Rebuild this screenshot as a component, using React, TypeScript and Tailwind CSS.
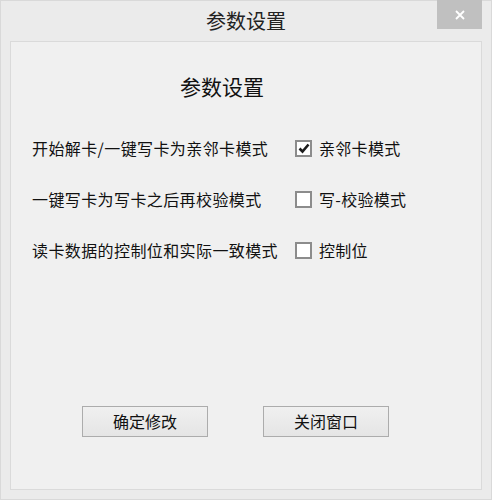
import React, { useState } from "react";

const font = { fontFamily: '"Microsoft YaHei", "Noto Sans CJK SC", "Noto Sans", sans-serif' };

function CheckBox({ checked, label, onToggle }: { checked: boolean; label: string; onToggle: () => void }) {
  return (
    <label className="flex items-center gap-[7px] cursor-default select-none" onClick={onToggle}>
      <span className="w-[17px] h-[17px] border-2 border-[#8c8c8c] bg-white flex items-center justify-center">
        {checked && (
          <svg width="12" height="11" viewBox="0 0 12 11">
            <path d="M1.5 5.5 L4.5 8.5 L10.5 1.5" fill="none" stroke="#1c1c1c" strokeWidth="2.6" />
          </svg>
        )}
      </span>
      <span className="text-[16px] leading-[17px] tracking-[0.3px] text-[#111]">{label}</span>
    </label>
  );
}

function Button({ children }: { children: React.ReactNode }) {
  return (
    <button className="w-[126px] h-[31px] border border-[#acacac] bg-gradient-to-b from-[#f0f0f0] to-[#e5e5e5] text-[16px] leading-[29px] text-[#111] hover:border-[#7eb4ea]">
      {children}
    </button>
  );
}

export default function App() {
  const [opts, setOpts] = useState([true, false, false]);
  const toggle = (i: number) => setOpts((o) => o.map((v, j) => (j === i ? !v : v)));

  const rows = [
    { text: "开始解卡/一键写卡为亲邻卡模式", box: "亲邻卡模式" },
    { text: "一键写卡为写卡之后再校验模式", box: "写-校验模式" },
    { text: "读卡数据的控制位和实际一致模式", box: "控制位" },
  ];

  return (
    <div className="w-[492px] h-[500px] border border-[#d9d9d9] bg-[#ebebeb] flex flex-col" style={font}>
      {/* title bar */}
      <div className="relative h-[40px] shrink-0 flex justify-center">
        <span className="text-[20px] leading-[20px] mt-[10px] text-[#222]">参数设置</span>
        <button className="absolute right-[9px] top-[-1px] w-[45px] h-[29px] bg-[#c0c0c0] flex items-center justify-center">
          <svg width="10" height="10" viewBox="0 0 10 10">
            <path d="M1 1 L9 9 M9 1 L1 9" stroke="#fff" strokeWidth="1.8" />
          </svg>
        </button>
      </div>

      {/* client area */}
      <div className="mx-[9px] h-[449px] border border-[#dadada] bg-[#f0f0f0] flex flex-col">
        <div className="pl-[169px] pt-[34px] text-[21px] leading-[21px] text-[#111]">参数设置</div>

        <div className="mt-[43px] pl-[21px] flex flex-col gap-[34px]">
          {rows.map((r, i) => (
            <div key={i} className="grid grid-cols-[263px_auto] items-center h-[17px]">
              <span className="text-[16px] leading-[17px] tracking-[0.4px] text-[#111] whitespace-nowrap">{r.text}</span>
              <CheckBox checked={opts[i]} label={r.box} onToggle={() => toggle(i)} />
            </div>
          ))}
        </div>

        <div className="mt-[147px] pl-[71px] flex gap-[55px]">
          <Button>确定修改</Button>
          <Button>关闭窗口</Button>
        </div>
      </div>
    </div>
  );
}
